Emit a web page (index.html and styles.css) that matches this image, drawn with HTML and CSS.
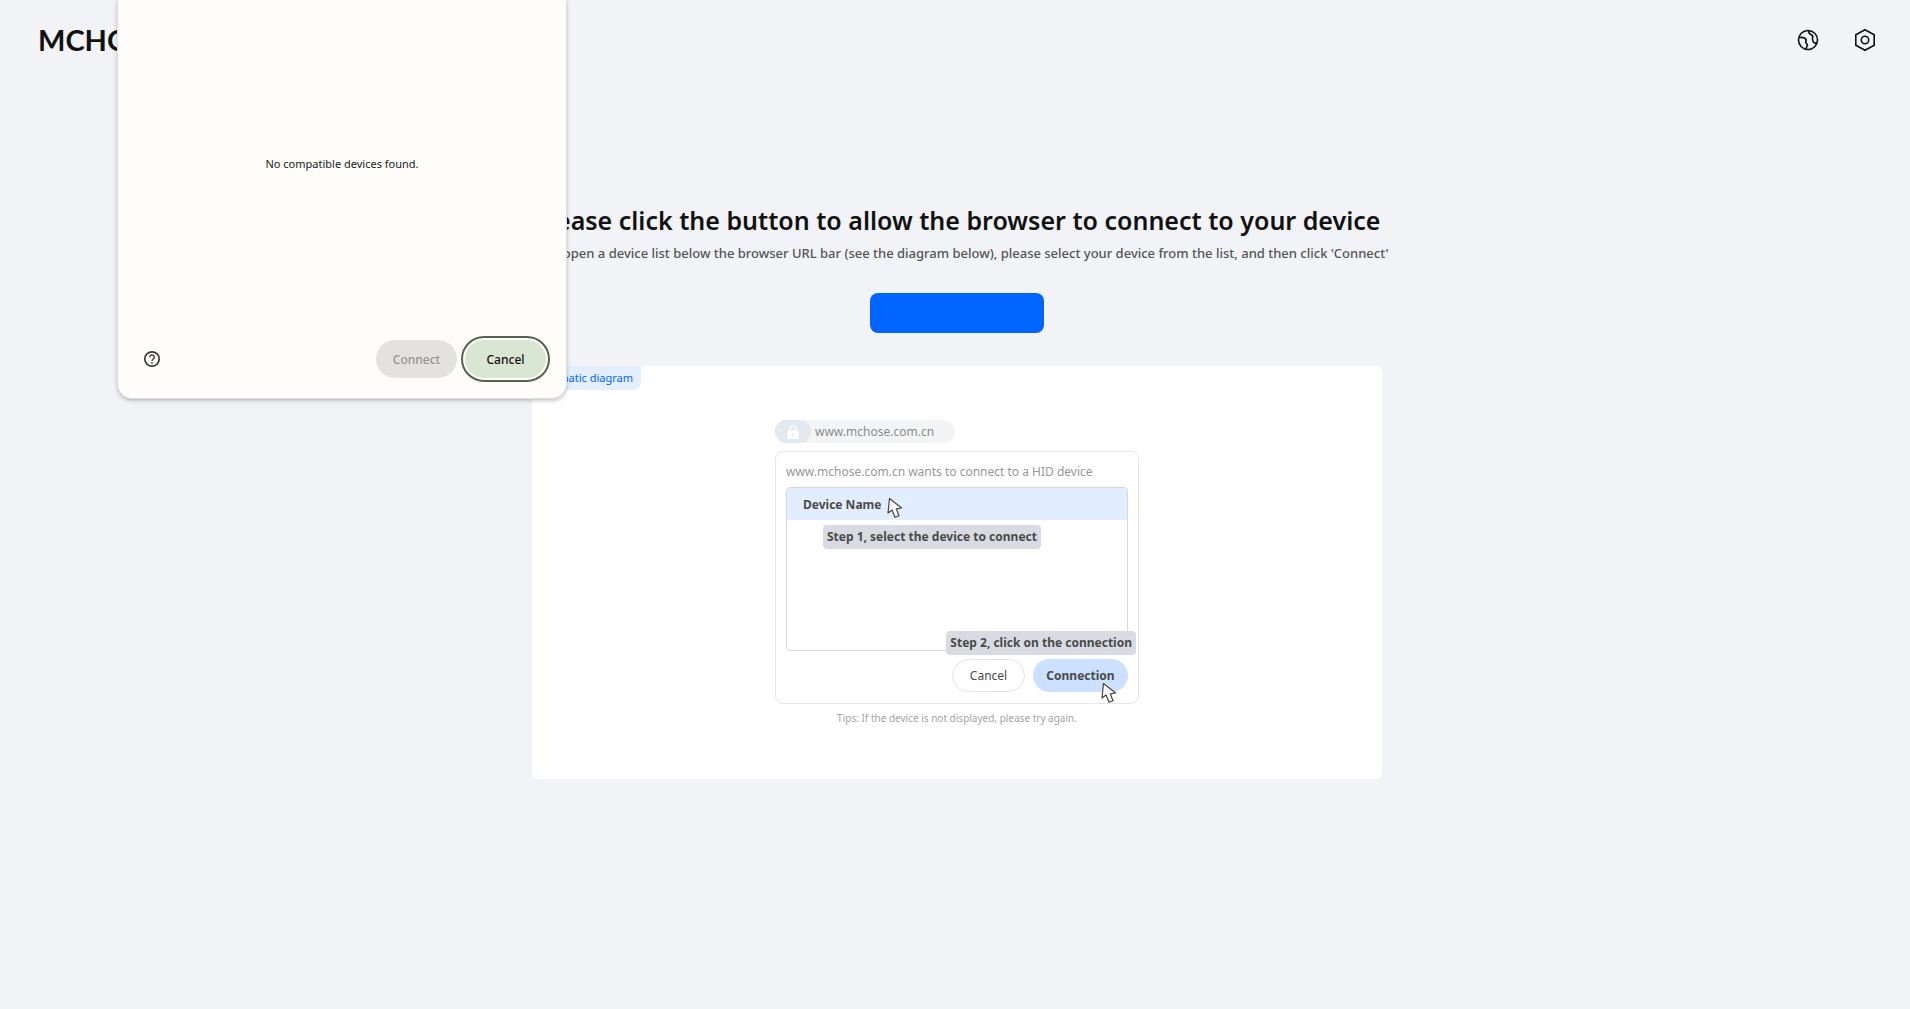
FILE: index.html
```
<!DOCTYPE html>
<html lang="en">
<head>
    <meta charset="UTF-8">
    <meta name="viewport" content="width=device-width, initial-scale=1.0">
    <title>MCHOSE</title>
    <link rel="stylesheet" href="styles.css">
</head>
<body>
    <!-- Header -->
    <header class="header">
        <a class="logo" href="#">MCHOSE</a>
        <nav class="header-actions">
            <button class="icon-button" type="button" aria-label="Language">
                <svg width="24" height="24" viewBox="0 0 24 24" fill="none" stroke="#111" stroke-width="1.6" stroke-linejoin="round">
                    <circle cx="12" cy="12" r="9.5"/>
                    <path d="M2.800 9.800C5 9.200 7 9.300 8.600 10C10.800 11.100 10.400 12.500 9.700 13.900C9.200 15.300 11.300 15.300 11.400 17C11.400 18.500 10 19 10.200 21.200"/>
                    <path d="M12.600 2.600C12.300 4.700 13.200 5.700 15 6.500C17 7.400 17.100 8.500 16.600 10C16.100 11.800 16.800 12.700 17.200 13.700C17.800 15 19 15.300 20.900 15"/>
                </svg>
            </button>
            <button class="icon-button" type="button" aria-label="Settings">
                <svg width="24" height="24" viewBox="0 0 24 24" fill="none" stroke="#111" stroke-width="1.6">
                    <path d="M12 1.700L21.200 6.800V17.200L12 22.300L2.800 17.200V6.800Z"/>
                    <circle cx="12" cy="12" r="3.700"/>
                </svg>
            </button>
        </nav>
    </header>

    <!-- Connection guide -->
    <main class="main">
        <h1 class="title">Please click the button to allow the browser to connect to your device</h1>
        <p class="subtitle">It will open a device list below the browser URL bar (see the diagram below), please select your device from the list, and then click 'Connect'</p>
        <button class="connect-button" type="button" aria-label="Connect device"></button>

        <section class="card">
            <span class="card-tag">Schematic diagram</span>

            <div class="diagram">
                <div class="url-bar">
                    <span class="url-lock">
                        <svg width="12" height="14" viewBox="0 0 12 14">
                            <path d="M3 6V3.800a3 3 0 0 1 6 0V6" fill="none" stroke="#fff" stroke-width="1.300"/>
                            <rect x="0.500" y="5.500" width="11" height="8.500" rx="1" fill="#fff"/>
                            <path d="M6 8.500v2.500" stroke="#dfe6ef" stroke-width="1.500"/>
                        </svg>
                    </span>
                    <span class="url-text">www.mchose.com.cn</span>
                </div>

                <div class="prompt">
                    <p class="prompt-text">www.mchose.com.cn wants to connect to a HID device</p>
                    <div class="device-list">
                        <div class="device-row">
                            <span>Device Name</span>
                            <svg class="pointer" width="16" height="22" viewBox="0 0 16 22">
                                <path d="M2.500 1.500L1 16L5 13L8 20.300L12 18.700L9.300 11.800L14.600 11Z" fill="#fff" stroke="#444" stroke-width="1.200" stroke-linejoin="round"/>
                            </svg>
                        </div>
                        <span class="step step-one">Step 1, select the device to connect</span>
                        <span class="step step-two">Step 2, click on the connection</span>
                    </div>
                    <div class="prompt-actions">
                        <button class="prompt-button" type="button">Cancel</button>
                        <button class="prompt-button primary" type="button">Connection
                            <svg class="pointer" width="16" height="22" viewBox="0 0 16 22">
                                <path d="M2.500 1.500L1 16L5 13L8 20.300L12 18.700L9.300 11.800L14.600 11Z" fill="#fff" stroke="#444" stroke-width="1.200" stroke-linejoin="round"/>
                            </svg>
                        </button>
                    </div>
                </div>
                <p class="tips">Tips: If the device is not displayed, please try again.</p>
            </div>
        </section>
    </main>

    <!-- Device chooser over the page -->
    <div class="chooser" role="dialog" aria-label="Device chooser">
        <p class="chooser-empty">No compatible devices found.</p>
        <div class="chooser-footer">
            <button class="help-button" type="button" aria-label="Help">
                <svg width="18" height="18" viewBox="0 0 18 18" fill="none" stroke="#3c3c3c">
                    <circle cx="9" cy="9" r="7.200" stroke-width="1.700"/>
                    <path d="M6.700 7.300a2.300 2.200 0 1 1 3.600 1.700C9.400 9.600 9 10 9 10.900" stroke-width="1.400"/>
                    <circle cx="9" cy="12.900" r="0.900" fill="#3c3c3c" stroke="none"/>
                </svg>
            </button>
            <button class="chooser-button" type="button" disabled>Connect</button>
            <button class="chooser-button cancel" type="button">Cancel</button>
        </div>
    </div>
</body>
</html>
```
FILE: styles.css
```
/* General */
* {
    box-sizing: border-box;
}

body {
    margin: 0;
    min-height: 100vh;
    background-color: #f1f3f7;
    color: #111;
    font-family: "Noto Sans", "Open Sans", sans-serif;
}

button {
    padding: 0;
    border: none;
    background: none;
    font-family: inherit;
    cursor: pointer;
}

p {
    margin: 0;
}

/* Header */
.header {
    display: flex;
    align-items: center;
    justify-content: space-between;
    height: 80px;
    padding: 0 33px 0 38px;
}

.logo {
    padding-bottom: 2px;
    color: #111;
    font-family: Lato, sans-serif;
    font-size: 29px;
    font-weight: 700;
    text-decoration: none;
}

.header-actions {
    display: flex;
    gap: 33px;
}

.icon-button,
.icon-button svg {
    display: block;
    width: 24px;
    height: 24px;
}

/* Connection guide */
.main {
    display: flex;
    flex-direction: column;
    align-items: center;
    padding: 120px 0 40px 4px;
}

.title {
    margin: 0;
    font-size: 25px;
    font-weight: 600;
    line-height: 40px;
}

.subtitle {
    color: #555;
    font-size: 13px;
    font-weight: 500;
    line-height: 26px;
}

.connect-button {
    width: 174px;
    height: 40px;
    margin-top: 27px;
    border-radius: 8px;
    background-color: #0066ff;
}

/* Card with the diagram */
.card {
    position: relative;
    width: 850px;
    max-width: 100%;
    margin-top: 33px;
    padding: 54px 0 47px;
    border-radius: 6px;
    background-color: #fff;
}

.card-tag {
    position: absolute;
    top: 0;
    left: 0;
    padding: 0 8px 0 2px;
    border-radius: 6px 0 8px 0;
    background-color: #e3eeff;
    color: #0066ff;
    font-size: 11px;
    line-height: 24px;
}

.diagram {
    display: flex;
    flex-direction: column;
    width: 364px;
    margin: 0 auto;
}

.url-bar {
    display: flex;
    align-items: center;
    align-self: flex-start;
    width: 180px;
    height: 23px;
    border-radius: 12px;
    background-color: #f3f4f6;
}

.url-lock {
    display: flex;
    align-items: center;
    justify-content: center;
    width: 36px;
    height: 23px;
    border-radius: 12px;
    background-color: #e3e9f1;
}

.url-text {
    margin-left: 4px;
    color: #8c8c8c;
    font-size: 12px;
}

.prompt {
    margin-top: 8px;
    padding: 8px 10px 11px;
    border: 1px solid #e4e6ee;
    border-radius: 8px;
}

.prompt-text {
    color: #979797;
    font-size: 12px;
    line-height: 24px;
}

.device-list {
    position: relative;
    height: 164px;
    margin-top: 3px;
    border: 1px solid #d3d8de;
    border-radius: 4px;
}

.device-row {
    display: flex;
    align-items: center;
    gap: 6px;
    height: 32px;
    padding-left: 16px;
    border-radius: 3px 3px 0 0;
    background-color: #e2eeff;
    color: #4a4a4a;
    font-size: 12px;
    font-weight: 700;
}

/* Step labels lie over the list and its border */
.step {
    position: absolute;
    padding: 0 4px;
    border-radius: 4px;
    background-color: #d8dce2;
    color: #4a4a4a;
    font-size: 12px;
    font-weight: 700;
    line-height: 24px;
    white-space: nowrap;
}

.step-one {
    top: 37px;
    left: 36px;
}

.step-two {
    right: -9px;
    bottom: -5px;
}

.prompt-actions {
    display: flex;
    justify-content: flex-end;
    gap: 8px;
    margin-top: 8px;
}

.prompt-button {
    position: relative;
    width: 73px;
    height: 33px;
    border: 1px solid #e0e4ea;
    border-radius: 17px;
    color: #4a4a4a;
    font-size: 12px;
}

.prompt-button.primary {
    width: 95px;
    border: none;
    background-color: #cce0ff;
    font-weight: 700;
}

.primary .pointer {
    position: absolute;
    right: 11px;
    bottom: -12px;
}

.device-row .pointer {
    margin-top: 8px;
}

.tips {
    color: #a3a3a3;
    font-size: 10px;
    line-height: 28px;
    text-align: center;
}

/* Device chooser */
.chooser {
    position: absolute;
    top: 0;
    left: 118px;
    display: flex;
    flex-direction: column;
    width: 448px;
    height: 398px;
    padding: 0 20px 16px;
    border-radius: 0 0 14px 14px;
    background-color: #fefdf9;
    box-shadow: 0 0 0 1px #dcdddd, 0 2px 5px rgba(0, 0, 0, 0.3);
}

.chooser-empty {
    padding-top: 152px;
    color: #222;
    font-size: 11px;
    line-height: 24px;
    text-align: center;
}

.chooser-footer {
    display: flex;
    align-items: center;
    gap: 8px;
    margin-top: auto;
    padding: 4px 0 4px 4px;
}

.help-button {
    width: 20px;
    height: 20px;
    margin-right: auto;
}

.help-button svg {
    display: block;
    margin: 1px;
}

.chooser-button {
    width: 81px;
    height: 38px;
    border-radius: 19px;
    font-size: 12px;
    font-weight: 500;
}

.chooser-button:disabled {
    background-color: #e3e2df;
    color: #949494;
    cursor: default;
}

.chooser-button.cancel {
    background-color: #dae6d4;
    color: #111;
    outline: 2px solid #54634f;
    outline-offset: 2px;
}
```
